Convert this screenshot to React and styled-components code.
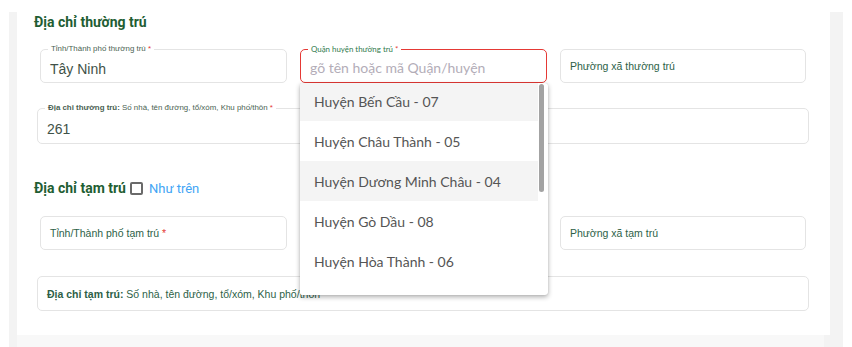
import React from "react";
import styled, { createGlobalStyle } from "styled-components";

const Global = createGlobalStyle`
  html, body { margin: 0; padding: 0; background: #ffffff; }
  body { font-family: "Liberation Sans", Arial, sans-serif; }
  * { box-sizing: border-box; }
`;

const Frame = styled.div`
  margin: 12px 9px 0 9px;
  width: 834px;
  height: 335px;
  background: #f3f3f3;
  padding: 0 13px 0 8px;
  display: flex;
  flex-direction: column;
`;

const Card = styled.div`
  background: #ffffff;
  height: 323px;
  padding: 0 0 0 17px;
  display: flex;
  flex-direction: column;
`;

const BottomStrip = styled.div`
  height: 12px;
  background: #f8f8f8;
  margin-right: 6px;
`;

const SectionTitle = styled.div`
  display: flex;
  align-items: center;
  gap: 4px;
  height: 20px;
  margin-top: ${(p) => p.$top}px;
  font-family: Roboto, "Liberation Sans", sans-serif;
  font-weight: 700;
  font-size: 14px;
  color: #1f5e33;
`;

const Checkbox = styled.span`
  width: 13px;
  height: 13px;
  border: 2px solid #6a6a6a;
  border-radius: 2px;
`;

const LinkText = styled.span`
  font-weight: 400;
  font-size: 13px;
  color: #42a5f5;
  margin-left: 2px;
`;

const Row3 = styled.div`
  display: grid;
  grid-template-columns: 247px 247px 246px;
  column-gap: 13px;
  margin-left: 6px;
  margin-top: ${(p) => p.$top}px;
`;

const RowFull = styled.div`
  display: flex;
  margin-left: 3px;
  width: 772px;
  margin-top: ${(p) => p.$top}px;
`;

const Field = styled.div`
  position: relative;
  flex: 1;
  height: ${(p) => p.$h}px;
  border: ${(p) => (p.$focus ? "1.5px solid #e53935" : "1px solid #e4e4e4")};
  border-radius: 5px;
  background: #fff;
  display: flex;
  align-items: center;
  padding: ${(p) => (p.$filled ? "5px 9px 0" : "0 9px")};
`;

const FloatLabel = styled.span`
  position: absolute;
  top: -6px;
  left: 7px;
  padding: 0 3px;
  background: #fff;
  font-size: 7.9px;
  line-height: 10px;
  color: ${(p) => (p.$green ? "#2f7a4c" : "#4a5f52")};
  white-space: nowrap;
  font-family: ${(p) => (p.$round ? "Lato, sans-serif" : '"Liberation Sans", Arial, sans-serif')};
`;

const Star = styled.span`
  color: #e53935;
`;

const Value = styled.span`
  font-size: 14px;
  color: #3f5248;
`;

const Placeholder = styled.span`
  font-family: Lato, "Noto Sans", sans-serif;
  font-size: 14px;
  color: #b3adb8;
  margin-top: 2px;
`;

const InnerLabel = styled.span`
  font-size: 10.5px;
  color: #2d5f47;
  white-space: nowrap;
`;

const Bold = styled.b`
  font-weight: 700;
`;

const Dropdown = styled.div`
  position: absolute;
  top: 33px;
  left: -1px;
  width: 248px;
  height: 212px;
  background: #fff;
  border-radius: 3px;
  box-shadow: 0 2px 5px rgba(0, 0, 0, 0.32), 0 0 1px rgba(0, 0, 0, 0.2);
  overflow: hidden;
  z-index: 10;
`;

const List = styled.div`
  margin-top: -2px;
  margin-right: 10px;
  display: flex;
  flex-direction: column;
`;

const Item = styled.div`
  height: 40px;
  flex: none;
  display: flex;
  align-items: center;
  padding-left: 14px;
  font-family: Lato, "Noto Sans", sans-serif;
  font-size: 14px;
  color: #555555;
  background: ${(p) => (p.$hl ? "#f4f4f4" : "#fff")};
`;

const Thumb = styled.div`
  position: absolute;
  right: 4px;
  top: 1px;
  width: 5px;
  height: 108px;
  border-radius: 3px;
  background: #a3a3a3;
`;

const districts = [
  { name: "Huyện Bến Cầu - 07", hl: true },
  { name: "Huyện Châu Thành - 05" },
  { name: "Huyện Dương Minh Châu - 04", hl: true },
  { name: "Huyện Gò Dầu - 08" },
  { name: "Huyện Hòa Thành - 06" },
  { name: "Huyện Tân Biên - 02" },
];

export default function App() {
  return (
    <>
      <Global />
      <Frame>
        <Card>
          <SectionTitle $top={0}>Địa chỉ thường trú</SectionTitle>

          <Row3 $top={17}>
            <Field $h={34} $filled>
              <FloatLabel>
                Tỉnh/Thành phố thường trú <Star>*</Star>
              </FloatLabel>
              <Value>Tây Ninh</Value>
            </Field>
            <Field $h={34} $focus>
              <FloatLabel $green $round>
                Quận huyện thường trú <Star>*</Star>
              </FloatLabel>
              <Placeholder>gõ tên hoặc mã Quận/huyện</Placeholder>
              <Dropdown>
                <List>
                  {districts.map((d) => (
                    <Item key={d.name} $hl={d.hl}>
                      {d.name}
                    </Item>
                  ))}
                </List>
                <Thumb />
              </Dropdown>
            </Field>
            <Field $h={34}>
              <InnerLabel>Phường xã thường trú</InnerLabel>
            </Field>
          </Row3>

          <RowFull $top={25}>
            <Field $h={36} $filled>
              <FloatLabel>
                <Bold>Địa chỉ thường trú:</Bold> Số nhà, tên đường, tổ/xóm, Khu phố/thôn <Star>*</Star>
              </FloatLabel>
              <Value>261</Value>
            </Field>
          </RowFull>

          <SectionTitle $top={34}>
            Địa chỉ tạm trú
            <Checkbox />
            <LinkText>Như trên</LinkText>
          </SectionTitle>

          <Row3 $top={18}>
            <Field $h={34}>
              <InnerLabel>
                Tỉnh/Thành phố tạm trú <Star>*</Star>
              </InnerLabel>
            </Field>
            <div />
            <Field $h={34}>
              <InnerLabel>Phường xã tạm trú</InnerLabel>
            </Field>
          </Row3>

          <RowFull $top={26}>
            <Field $h={35}>
              <InnerLabel>
                <Bold>Địa chỉ tạm trú:</Bold> Số nhà, tên đường, tổ/xóm, Khu phố/thôn
              </InnerLabel>
            </Field>
          </RowFull>
        </Card>
        <BottomStrip />
      </Frame>
    </>
  );
}
